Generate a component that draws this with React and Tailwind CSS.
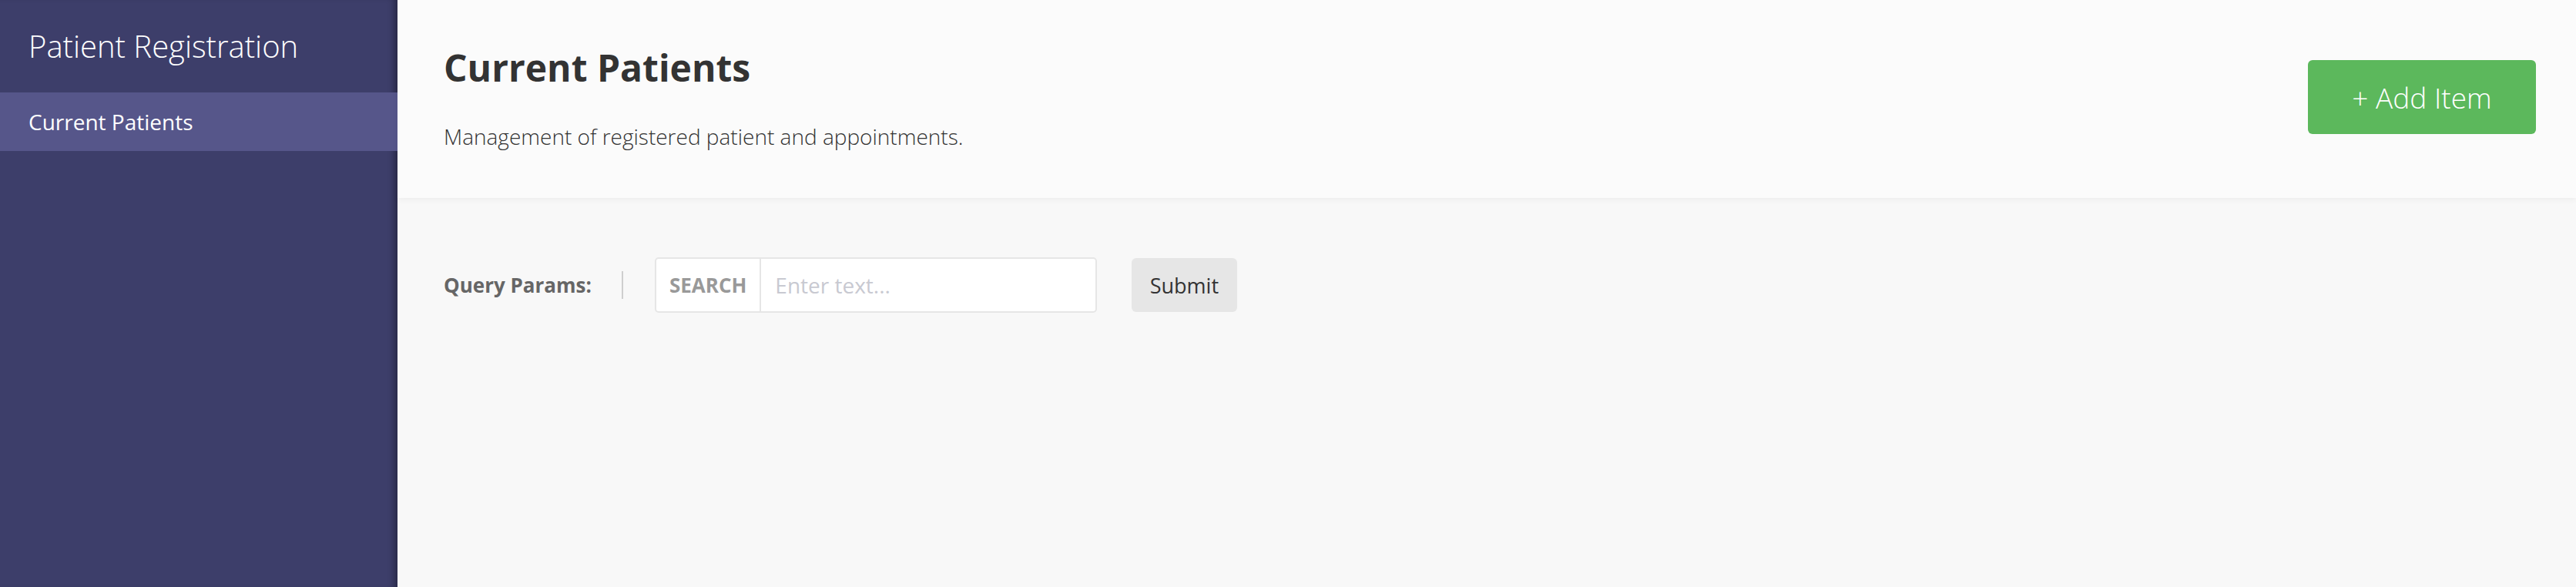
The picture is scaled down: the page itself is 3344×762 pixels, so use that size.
import React from 'react';

const font = { fontFamily: '"Open Sans", "Noto Sans", sans-serif' };

function Sidebar() {
  return (
    <aside className="w-[516px] shrink-0 bg-[#3d3e6a] shadow-[inset_-10px_0_10px_-6px_rgba(0,0,0,0.35)]">
      <div className="h-[120px] flex items-center pl-[37px]">
        <h1 className="text-[40px] leading-none font-light text-white">Patient Registration</h1>
      </div>
      <nav>
        <a className="h-[76px] flex items-center pl-[37px] bg-[#56568a] text-[28px] leading-none text-white">
          Current Patients
        </a>
      </nav>
    </aside>
  );
}

function Header() {
  return (
    <header className="relative z-10 h-[257px] flex justify-between pl-[60px] pr-[52px] bg-[#fbfbfb] shadow-[0_2px_8px_rgba(0,0,0,0.05)]">
      <div className="pt-[64px]">
        <h2 className="text-[48px] leading-none font-bold text-[#333]">Current Patients</h2>
        <p className="mt-[51px] text-[28px] leading-none font-light text-[#333]">
          Management of registered patient and appointments.
        </p>
      </div>
      <div className="pt-[78px]">
        <button className="w-[296px] h-[96px] rounded-[6px] bg-[#5cb85c] text-white text-[37px] font-light leading-none">
          + Add Item
        </button>
      </div>
    </header>
  );
}

function QueryBar() {
  return (
    <div className="flex items-center pl-[60px] pt-[77px]">
      <span className="text-[26px] leading-none font-bold text-[#666]">Query Params:</span>
      <span className="ml-[39px] w-[2px] h-[36px] bg-[#cfcfcf]" />
      <div className="ml-[41px] flex w-[574px] h-[72px] border-2 border-[#e6e6e6] rounded-[5px] bg-white">
        <span className="flex items-center px-[17px] border-r-2 border-[#e6e6e6] text-[26px] leading-none font-bold text-[#999]">
          SEARCH
        </span>
        <input
          className="flex-1 min-w-0 pl-[18px] text-[28px] text-[#333] placeholder:text-[#c8c9d1] outline-none bg-transparent"
          placeholder="Enter text..."
          style={font}
        />
      </div>
      <button className="ml-[45px] w-[137px] h-[70px] rounded-[6px] bg-[#e6e6e6] text-[27px] leading-none text-[#333]">
        Submit
      </button>
    </div>
  );
}

export default function App() {
  return (
    <div className="flex h-screen overflow-hidden" style={font}>
      <Sidebar />
      <main className="flex-1 bg-[#f8f8f8]">
        <Header />
        <QueryBar />
      </main>
    </div>
  );
}
